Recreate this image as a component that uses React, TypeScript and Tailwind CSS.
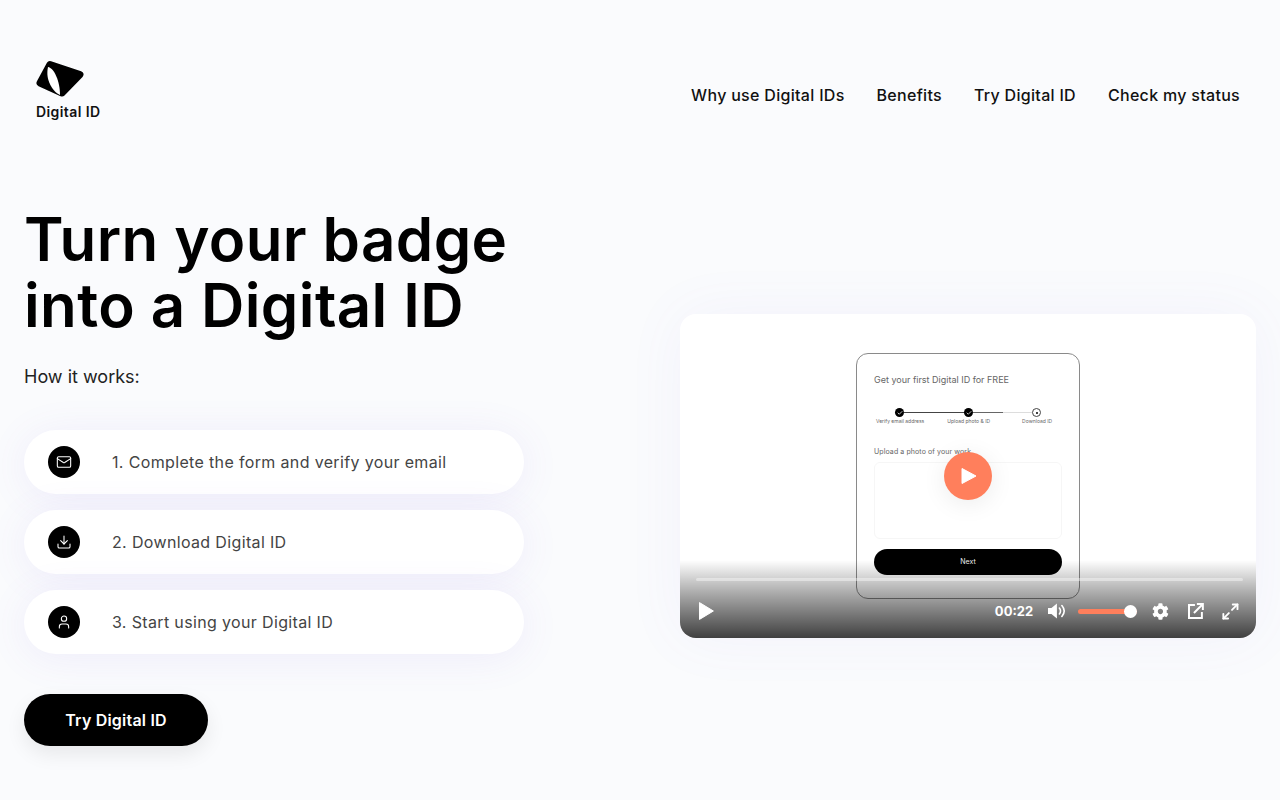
import React from 'react';
import { Mail, Download, User, Check, Maximize2 } from 'lucide-react';
import { FaCog } from 'react-icons/fa';

const navLinks = ['Why use Digital IDs', 'Benefits', 'Try Digital ID', 'Check my status'];

const steps = [
  { icon: Mail, label: '1. Complete the form and verify your email' },
  { icon: Download, label: '2. Download Digital ID' },
  { icon: User, label: '3. Start using your Digital ID' },
];

function Logo() {
  return (
    <svg width="50" height="40" viewBox="0 0 50 40">
      <path
        d="M14 4.500 L44 14.500 L26 33 L4 23 Z"
        fill="#000"
        stroke="#000"
        strokeWidth="7"
        strokeLinejoin="round"
      />
      <path d="M12 7 C18 8 24 21 24 35 C17 32 9 20 12 7 Z" fill="#fff" />
    </svg>
  );
}

function VideoPanel() {
  return (
    <div className="relative h-[324px] w-[576px] overflow-hidden rounded-2xl bg-white shadow-[0_0_60px_rgba(120,100,220,0.06)]">
      <div className="flex h-full justify-center pt-[39px]">
        <div className="flex h-[246px] w-[224px] flex-col rounded-xl border border-[#8a8a8a] bg-white px-[17px] pt-[20px]">
          <p className="text-[9px] leading-3 text-[#666]">Get your first Digital ID for FREE</p>
          <div className="mt-[22px] flex items-center pl-[21px]">
            <span className="flex h-[9px] w-[9px] items-center justify-center rounded-full bg-black">
              <Check className="h-[6px] w-[6px] text-white" strokeWidth={3} />
            </span>
            <span className="h-px w-[60px] bg-[#444]" />
            <span className="flex h-[9px] w-[9px] items-center justify-center rounded-full bg-black">
              <Check className="h-[6px] w-[6px] text-white" strokeWidth={3} />
            </span>
            <span className="h-px w-[30px] bg-[#666]" />
            <span className="h-px w-[29px] bg-[#ddd]" />
            <span className="flex h-[9px] w-[9px] items-center justify-center rounded-full border border-[#444]">
              <span className="h-[2px] w-[2px] rounded-full bg-black" />
            </span>
          </div>
          <div className="flex pl-[2px] text-[5px] leading-2 text-[#666]">
            <span>Verify email address</span>
            <span className="ml-[23px]">Upload photo &amp; ID</span>
            <span className="ml-[32px]">Download ID</span>
          </div>
          <p className="mt-[22px] text-[7px] leading-[10px] tracking-[0.1px] text-[#666]">Upload a photo of your work</p>
          <div className="mt-[5px] h-[77px] rounded-md border border-[#f6f6f6]" />
          <div className="mt-[10px] flex h-[26px] items-center justify-center rounded-full bg-black text-[7px] text-[#eee]">
            Next
          </div>
        </div>
      </div>

      <button className="absolute left-[264px] top-[138px] flex h-12 w-12 items-center justify-center rounded-full bg-[#ff7f5c] shadow-[0_4px_24px_rgba(0,0,0,0.08)]">
        <svg width="16" height="18" viewBox="0 0 16 18" className="ml-[2px]">
          <path d="M1 1.500 V16.500 L15 9 Z" fill="#fff" stroke="#fff" strokeLinejoin="round" />
        </svg>
      </button>

      <div className="absolute inset-x-0 bottom-0 h-[78px] bg-gradient-to-b from-transparent via-black/35 via-45% to-black/75 px-4 pt-[18px]">
        <div className="h-[3px] w-[547px] rounded-full bg-white/40" />
        <div className="mt-[20px] flex items-center text-white">
          <svg width="17" height="20" viewBox="0 0 17 20" className="ml-[2px]">
            <path d="M1.500 1.500 V18.500 L15.500 10 Z" fill="#fff" stroke="#fff" strokeLinejoin="round" />
          </svg>
          <span className="ml-[280px] text-[13px] font-bold leading-5">00:22</span>
          <svg width="20" height="18" viewBox="0 0 20 18" className="ml-[14px]">
            <path d="M1 6 H4.500 L10 1.500 V16.500 L4.500 12 H1 Z" fill="#fff" />
            <path d="M12.500 6 C14 8 14 10 12.500 12 M15 3.500 C18 7 18 11 15 14.500" fill="none" stroke="#fff" strokeWidth="1.600" strokeLinecap="round" />
          </svg>
          <div className="relative ml-[11px] h-[5px] w-[60px] rounded-full bg-[#ff7f5c]">
            <span className="absolute right-0 top-[-4px] h-[13px] w-[13px] rounded-full bg-white" />
          </div>
          <FaCog className="ml-[15px] h-[17px] w-[17px]" />
          <svg width="18" height="18" viewBox="0 0 18 18" className="ml-[18px]">
            <path d="M8 3 H2 V16 H15 V10" fill="none" stroke="#fff" strokeWidth="2" />
            <path d="M7 11 L15 3 M10 2 H16 V8" fill="none" stroke="#fff" strokeWidth="2" />
          </svg>
          <Maximize2 className="ml-[16px] h-[19px] w-[19px]" strokeWidth={2.4} />
        </div>
      </div>
    </div>
  );
}

export default function App() {
  return (
    <div className="min-h-[800px] overflow-hidden bg-[#fafbfd] font-['Inter','Liberation_Sans',sans-serif] text-black">
      <header className="flex items-start justify-between pl-9 pr-10 pt-[60px]">
        <div>
          <Logo />
          <div className="mt-[2px] text-sm font-semibold leading-5 tracking-[0.4px] text-[#111]">Digital ID</div>
        </div>
        <nav className="mt-[23px] flex gap-8 text-base font-medium leading-6 tracking-[0.3px] text-[#111]">
          {navLinks.map((link) => (
            <a key={link} href="#">{link}</a>
          ))}
        </nav>
      </header>

      <main className="flex items-start justify-between pl-6 pr-6">
        <section className="w-[500px] pt-[84px]">
          <h1 className="text-[60px] font-semibold leading-[66px] tracking-[0.4px]">
            Turn your badge<br />into a Digital ID
          </h1>
          <p className="mt-[25px] text-lg leading-7 text-[#222]">How it works:</p>
          <div className="mt-[39px] flex flex-col gap-4">
            {steps.map(({ icon: Icon, label }) => (
              <div
                key={label}
                className="flex h-16 items-center rounded-[32px] bg-white pl-6 shadow-[0_4px_40px_rgba(120,90,220,0.09)]"
              >
                <span className="flex h-8 w-8 items-center justify-center rounded-full bg-black">
                  <Icon className="h-4 w-4 text-white" strokeWidth={1.6} />
                </span>
                <span className="ml-8 text-base tracking-[0.35px] text-[#444]">{label}</span>
              </div>
            ))}
          </div>
          <button className="mt-[40px] h-[52px] w-[184px] rounded-[26px] bg-black text-base font-semibold tracking-[0.2px] text-white shadow-[0_8px_20px_rgba(0,0,0,0.08)]">
            Try Digital ID
          </button>
        </section>
        <section className="pt-[192px]">
          <VideoPanel />
        </section>
      </main>
    </div>
  );
}
